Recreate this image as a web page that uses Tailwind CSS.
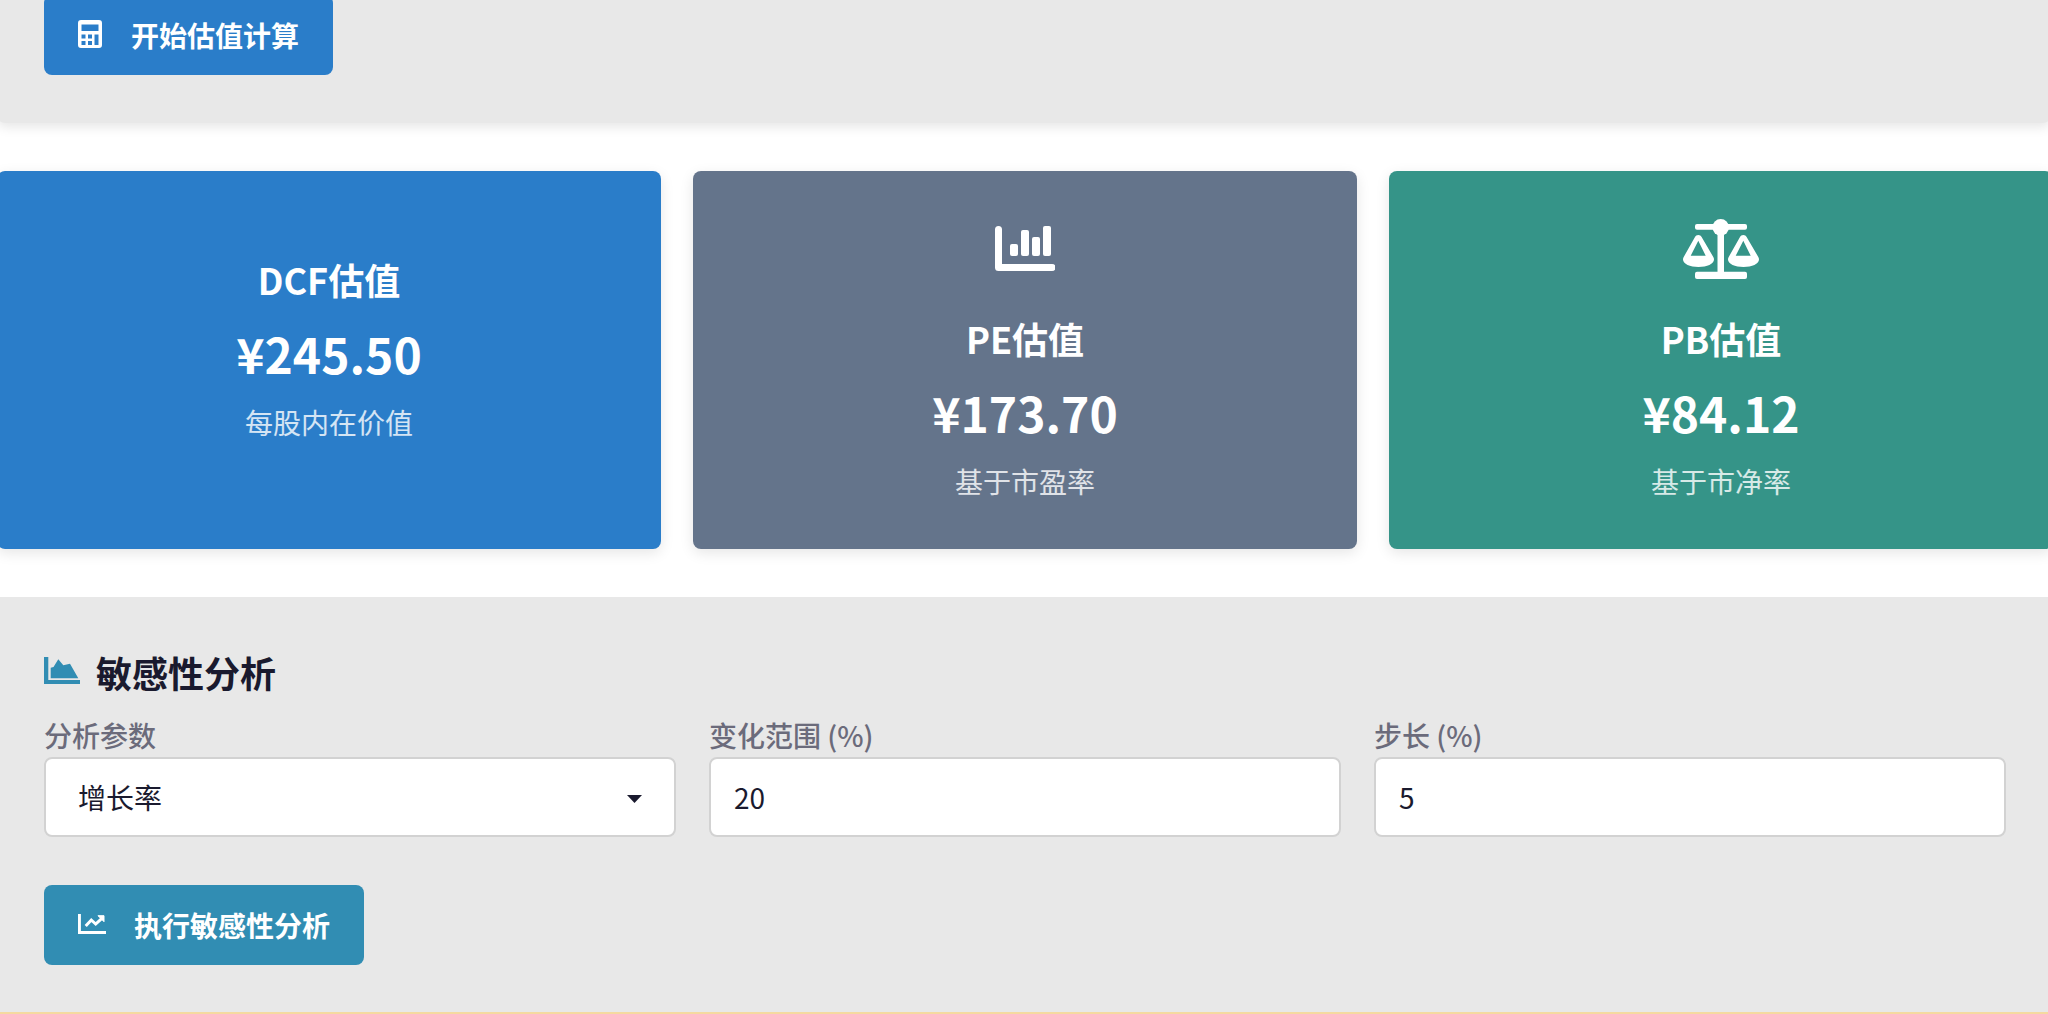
<!DOCTYPE html>
<html lang="zh-CN">
<head>
<meta charset="utf-8">
<title>估值计算</title>
<script src="https://cdn.jsdelivr.net/npm/@tailwindcss/browser@4"></script>
</head>
<body class="bg-white h-[1014px] overflow-hidden font-['Noto_Sans_CJK_SC','Noto_Sans',sans-serif]">
<div class="h-[1014px] overflow-hidden">
  <section class="-mt-[5px] -mx-[3px] rounded-[8px] bg-[#e8e8e8] pl-[47px] pb-[48px] shadow-[0_4px_12px_rgba(0,0,0,0.1)]">
    <button class="flex items-center h-[80px] w-[289px] pl-[34px] rounded-[8px] bg-[#2a7dc9] text-white text-[28px] font-bold leading-none">
      <svg class="w-[24px] h-[28px] mr-[29px] shrink-0 -translate-y-[1px]" viewBox="0 0 24 28" fill="#fff">
        <path fill-rule="evenodd" d="M3 0h18a3 3 0 0 1 3 3v22a3 3 0 0 1-3 3H3a3 3 0 0 1-3-3V3a3 3 0 0 1 3-3zM3.500 4.500v6.500h17V4.500h-17zM3.500 14.500v4h4v-4h-4zM3.500 21v4h4v-4h-4zM10 14.500v4h4v-4h-4zM10 21v4h4v-4h-4zM16.500 14.500V25h4V14.500h-4z"/>
      </svg>
      <span>开始估值计算</span>
    </button>
  </section>

  <div class="-ml-[3px] mt-[48px] grid grid-cols-[664px_664px_664px] gap-[32px] w-[2060px]">
    <div class="h-[378px] pb-[26px] rounded-[8px] bg-[#2a7dc9] text-white flex flex-col items-center justify-center shadow-[0_4px_14px_rgba(0,0,0,0.1)]">
      <h3 class="text-[36px] font-bold leading-[54px] mb-[11px]">DCF估值</h3>
      <div class="text-[48px] font-bold leading-[72px] mb-[12px]">¥245.50</div>
      <p class="text-[28px] leading-[42px] text-white/80">每股内在价值</p>
    </div>
    <div class="h-[378px] pb-[26px] rounded-[8px] bg-[#64748b] text-white flex flex-col items-center justify-center shadow-[0_4px_14px_rgba(0,0,0,0.1)]">
      <div class="h-[118px] flex items-start pt-[33px]">
        <svg class="w-[60px] h-[45px]" viewBox="0 0 60 45" fill="#fff">
          <path d="M3.500 0A3.500 3.500 0 0 1 7 3.500V38h50a3.500 3.500 0 0 1 0 7H3.500A3.500 3.500 0 0 1 0 41.500V3.500A3.500 3.500 0 0 1 3.500 0z"/>
          <rect x="15" y="18" width="8" height="12" rx="2"/><rect x="26" y="4" width="8" height="26" rx="2"/><rect x="37" y="11" width="8" height="19" rx="2"/><rect x="48" y="0" width="8" height="30" rx="2"/>
        </svg>
      </div>
      <h3 class="text-[36px] font-bold leading-[54px] mb-[11px]">PE估值</h3>
      <div class="text-[48px] font-bold leading-[72px] mb-[12px]">¥173.70</div>
      <p class="text-[28px] leading-[42px] text-white/80">基于市盈率</p>
    </div>
    <div class="h-[378px] pb-[26px] rounded-[8px] bg-[#359488] text-white flex flex-col items-center justify-center shadow-[0_4px_14px_rgba(0,0,0,0.1)]">
      <div class="h-[118px] flex items-start pt-[26px]">
        <svg class="w-[76px] h-[61px]" viewBox="0 0 76 61" fill="#fff">
          <rect x="12" y="5" width="52" height="5.700" rx="2"/>
          <circle cx="37.700" cy="8.300" r="8.300"/>
          <rect x="34.500" y="10" width="6.500" height="45"/>
          <rect x="12" y="52.700" width="52" height="7.300" rx="2"/>
          <path fill-rule="evenodd" d="M15.300 16c1.500 0 2.700.8 3.300 2L30.300 38c.5 1 .7 1.500.7 2.500C31 45 24 48 15.500 48S0 45 0 40.500c0-1 .2-1.500.7-2.500L12 18c.6-1.200 1.800-2 3.300-2zM15.300 21.700L7.700 36.700h15z"/>
          <path fill-rule="evenodd" d="M60.300 16c1.500 0 2.700.8 3.300 2L75.300 38c.5 1 .7 1.500.7 2.500C76 45 69 48 60.500 48S45 45 45 40.500c0-1 .2-1.500.7-2.500L57 18c.6-1.200 1.800-2 3.300-2zM60.300 21.700L52.700 36.700h15z"/>
        </svg>
      </div>
      <h3 class="text-[36px] font-bold leading-[54px] mb-[11px]">PB估值</h3>
      <div class="text-[48px] font-bold leading-[72px] mb-[12px]">¥84.12</div>
      <p class="text-[28px] leading-[42px] text-white/80">基于市净率</p>
    </div>
  </div>

  <section class="mt-[48px] h-[415px] bg-[#e8e8e8] pl-[44px] pr-[42px] pt-[48px]">
    <h2 class="flex items-center h-[54px] text-[36px] font-bold text-[#1a1a2e] leading-none">
      <svg class="w-[36px] h-[27px] mr-[16px] shrink-0 -translate-y-[2px]" viewBox="0 0 36 27" fill="#318db3">
        <path d="M0 0h4.300v23H36v4H0V0z"/>
        <path d="M6.700 21.300V10.700L9.500 10 14.300 2.300 19.300 8.300 26 6.700 34.300 21.300z"/>
      </svg>
      敏感性分析
    </h2>
    <div class="mt-[20px] grid grid-cols-3 gap-[33px]">
      <label class="block">
        <span class="block text-[28px] font-medium text-[#6b6b7b] leading-[32px] mb-[6px]">分析参数</span>
        <span class="relative block">
          <select class="block w-full h-[80px] appearance-none bg-white border-2 border-[#d2d2d2] rounded-[8px] pl-[32px] text-[28px] text-[#1a1a2e]"><option>增长率</option></select>
          <svg class="absolute right-[34px] top-[38px] w-[15px] h-[8px] pointer-events-none" viewBox="0 0 15 8" fill="#1a1a2e"><path d="M0 0h15L7.500 8z"/></svg>
        </span>
      </label>
      <label class="block">
        <span class="block text-[28px] font-medium text-[#6b6b7b] leading-[32px] mb-[6px]">变化范围 (%)</span>
        <input type="text" value="20" class="block w-full h-[80px] bg-white border-2 border-[#d2d2d2] rounded-[8px] pl-[23px] text-[28px] text-[#1a1a2e]">
      </label>
      <label class="block">
        <span class="block text-[28px] font-medium text-[#6b6b7b] leading-[32px] mb-[6px]">步长 (%)</span>
        <input type="text" value="5" class="block w-full h-[80px] bg-white border-2 border-[#d2d2d2] rounded-[8px] pl-[23px] text-[28px] text-[#1a1a2e]">
      </label>
    </div>
    <button class="mt-[48px] flex items-center h-[80px] w-[320px] pl-[34px] rounded-[8px] bg-[#318db3] text-white text-[28px] font-bold leading-none">
      <svg class="w-[28px] h-[20px] mr-[28px] shrink-0 -translate-y-[1px]" viewBox="0 0 28 20" fill="none" stroke="#fff" stroke-width="3">
        <path d="M1.400 0v18.500H28"/>
        <path d="M7.700 12l5.600-6 4.400 4 7.300-6.700"/>
        <path d="M20 1.700h6V7.700L20 1.700z" fill="#fff" stroke-width="1"/>
      </svg>
      <span>执行敏感性分析</span>
    </button>
  </section>
  <div class="h-[2px] bg-[#f5d9a0]"></div>
</div>
</body>
</html>
